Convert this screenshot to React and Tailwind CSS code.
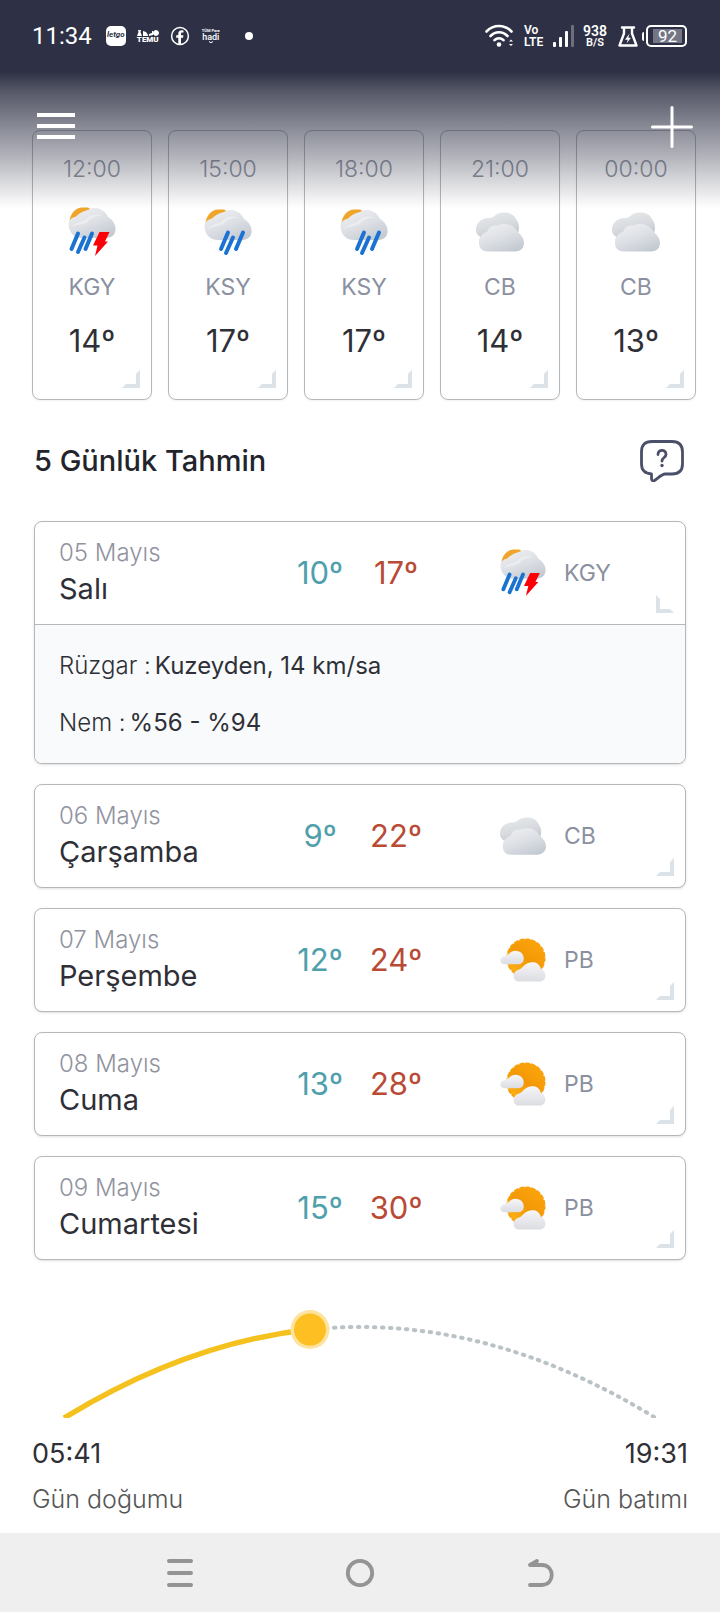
const hours = [
  { time: '12:00', code: 'KGY', temp: 14 },
  { time: '15:00', code: 'KSY', temp: 17 },
  { time: '18:00', code: 'KSY', temp: 17 },
  { time: '21:00', code: 'CB', temp: 14 },
  { time: '00:00', code: 'CB', temp: 13 },
]

const days = [
  { date: '05 Mayıs', day: 'Salı', low: 10, high: 17, code: 'KGY', wind: 'Kuzeyden, 14 km/sa', humidity: '%56 - %94' },
  { date: '06 Mayıs', day: 'Çarşamba', low: 9, high: 22, code: 'CB' },
  { date: '07 Mayıs', day: 'Perşembe', low: 12, high: 24, code: 'PB' },
  { date: '08 Mayıs', day: 'Cuma', low: 13, high: 28, code: 'PB' },
  { date: '09 Mayıs', day: 'Cumartesi', low: 15, high: 30, code: 'PB' },
]

// gradients shared by every weather icon
function IconDefs() {
  return (
    <svg className="absolute w-0 h-0" aria-hidden="true">
      <defs>
        <linearGradient id="cloud" x1="0.2" y1="0" x2="0.8" y2="1">
          <stop offset="0" stopColor="#eeeff2" />
          <stop offset="0.5" stopColor="#dcdfe4" />
          <stop offset="1" stopColor="#c2c8d1" />
        </linearGradient>
        <linearGradient id="cloudBack" x1="0.3" y1="0" x2="0.7" y2="1">
          <stop offset="0" stopColor="#e6e8ea" />
          <stop offset="0.5" stopColor="#d8dbdf" />
          <stop offset="1" stopColor="#c0c5cb" />
        </linearGradient>
        <linearGradient id="cloudWhite" x1="0" y1="0" x2="0" y2="1">
          <stop offset="0" stopColor="#f6f6f8" />
          <stop offset="1" stopColor="#dcdde2" />
        </linearGradient>
        <linearGradient id="sun" x1="0.8" y1="0.1" x2="0.2" y2="0.9">
          <stop offset="0" stopColor="#fba40a" />
          <stop offset="0.5" stopColor="#f29806" />
          <stop offset="1" stopColor="#fbb013" />
        </linearGradient>
      </defs>
    </svg>
  )
}

function RainCloud() {
  return (
    <>
      <path d="M1.500 14C2.500 6 8 .8 14 .6L20 .6 23 2.400 13 8Z" fill="#f0a52a" />
      <path d="M.5 17C.5 13 4 10.500 8 9.500 13 4 20 3.500 22 2 24 .8 26 .8 28 1 34 1.500 38 5.500 40 10 45 13 48 18 47.500 23 47 28.500 43 31 37 31H14C6 31 .5 25 .5 17Z" fill="url(#cloud)" />
      <path d="M3 21C7 15 13 15 17 13 21 8 29 6 35 9 31 8 23 10 20 15 15 18 8 17 3 21Z" fill="#fff" opacity="0.35" />
    </>
  )
}

function WeatherIcon({ code, className }) {
  return (
    <svg viewBox="0 0 48 50" className={className} aria-hidden="true">
      {code === 'KGY' && (
        <>
          <RainCloud />
          <path d="M10 26.500 3.500 42M16.500 30.500 10 45M24 26.500 17.500 42" stroke="#1a73d2" strokeWidth="4" strokeLinecap="round" />
          <path d="M31.500 25H41.500L37 34.500H40L27 49 29.500 38.500H25Z" fill="#fb0007" />
        </>
      )}
      {code === 'KSY' && (
        <g transform="translate(0 2)">
          <RainCloud />
          <path d="M24 23.500 17 40M29 28.500 22 44M39 23.500 32 40" stroke="#1a73d2" strokeWidth="4" strokeLinecap="round" />
        </g>
      )}
      {code === 'CB' && (
        <>
          <path d="M0 23C0 16 5 11 12 11 17 11 18 9 21 7 30 4 37 6 40 12 43 16 44 21 42 26L12 31C5 32 0 28 0 23Z" fill="url(#cloudBack)" />
          <path d="M11 25C13 20 16 18 21 18.500 28 15.500 38 16.500 41.500 25 46 28 48 32 48 36 48 41 44 44.500 39 44.500H12C6 44.500 2.500 41 3 35 3 29 7 26 11 25Z" fill="url(#cloud)" />
        </>
      )}
      {code === 'PB' && (
        <>
          <circle cx="27" cy="23" r="19.500" fill="url(#sun)" />
          <circle cx="27" cy="23" r="19.500" fill="none" stroke="#f7a00c" strokeWidth="2" strokeDasharray="3.500 2.600" strokeLinecap="round" />
          <path d="M5 21C6 20 8 20 10 18 13 14 21 14.500 23.500 19 26 23 25 29.500 19 29.500H5C-1.500 29.500-1 21.500 5 21Z" fill="url(#cloudWhite)" />
          <path d="M20 35C23 34 24 31 28 29 33 26 41 27 42.500 34 49 36 49.500 47.500 41 47.500H20C12.500 47.500 12 37 20 35Z" fill="url(#cloudWhite)" />
        </>
      )}
    </svg>
  )
}

function Corner({ open = false }) {
  return (
    <svg viewBox="0 0 18 18" className={`absolute right-[11px] bottom-[11px] w-[18px] h-[18px] ${open ? 'rotate-90' : ''}`} aria-hidden="true">
      <path d="M18 0V18H0L4 14H14V4Z" fill="#dbe2e8" />
    </svg>
  )
}

function StatusBar() {
  return (
    <div className="flex items-center h-[72px] pl-8 pr-[33px] text-white font-[Roboto,sans-serif]">
      <span className="text-2xl leading-6">11:34</span>
      <span className="ml-[14px] w-5 h-5 rounded-[5px] bg-white text-[#2e3145] text-[8px] leading-[18px] font-bold italic text-center">letgo</span>
      <div className="ml-[11px] w-[22px] flex flex-col items-center">
        <svg viewBox="0 0 22 6" className="w-[22px] h-[6px]" fill="currentColor" aria-hidden="true">
          <path d="M1 0H4L3.500 2 5 6H0L1.500 2ZM6 1 9 2 11 5V6H6ZM12 4 15 3V1H16V5L12 6ZM19 0A3 3 0 1 1 18.900 0Z" />
        </svg>
        <span className="text-[8px] leading-[7px] font-black">TEMU</span>
      </div>
      <svg viewBox="0 0 20 20" className="ml-[11px] w-5 h-5" aria-hidden="true">
        <circle cx="10" cy="10" r="8.400" fill="none" stroke="#fff" strokeWidth="1.500" />
        <path d="M8.300 18V11.800H6.200V9.300H8.300V7.800C8.300 5.400 9.500 4.200 11.700 4.200L13.500 4.400V6.500H12.300C11.300 6.500 11 7 11 7.800V9.300H13.400L13 11.800H11V18Z" fill="#fff" />
      </svg>
      <div className="ml-[10px] w-[22px] flex flex-col items-center">
        <span className="text-[4px] leading-[4px] font-bold whitespace-nowrap">TÜM Para</span>
        <span className="text-[9px] leading-[8px] font-medium">hadi</span>
        <svg viewBox="0 0 6 3" className="w-[6px] h-[3px]" fill="none" stroke="currentColor" aria-hidden="true">
          <path d="M1 .5Q3 3 5 .5" />
        </svg>
      </div>
      <span className="ml-[23px] w-2 h-2 rounded-full bg-white" />

      <div className="ml-auto flex items-center">
        <svg viewBox="0 0 28 24" className="w-7 h-6" fill="none" stroke="#fff" strokeWidth="2.600" strokeLinecap="round" aria-hidden="true">
          <path d="M1.500 7.500C8.500.2 19.500.2 26.500 7.500M5.500 12C10.500 7 17.500 7 22.500 12M9.500 16.200C12 13.600 16 13.600 18.500 16.200" />
          <circle cx="14" cy="20.500" r="2.300" fill="#fff" stroke="none" />
          <path d="M24 17.600 26 15.600 28 17.600ZM24 20 26 22 28 20Z" fill="#fff" stroke="none" />
        </svg>
        <span className="ml-[11px] w-5 text-[12px] leading-[12px] font-semibold">Vo LTE</span>
        <svg viewBox="0 0 22 22" className="ml-[9px] w-[22px] h-[22px]" fill="#fff" aria-hidden="true">
          <rect x="0" y="17" width="3" height="5" rx="1" />
          <rect x="6" y="12" width="3" height="10" rx="1" />
          <rect x="12" y="6" width="3" height="16" rx="1" />
          <rect x="18" y="0" width="3" height="22" rx="1" opacity="0.3" />
        </svg>
        <div className="ml-[8px] w-6 flex flex-col items-center font-semibold">
          <span className="text-[14px] leading-[12px]">938</span>
          <span className="text-[11px] leading-[11px]">B/S</span>
        </div>
        <svg viewBox="0 0 20 21" className="ml-[11px] w-5 h-[21px]" fill="none" stroke="#fff" strokeWidth="2.400" strokeLinejoin="round" strokeLinecap="round" aria-hidden="true">
          <path d="M4 1.500H16M6 1.500V7.500L1.500 19.500H18.500L14 7.500V1.500" />
          <path d="M11.500 7.500 7 13.800H9.800L8.500 17.500 13 11.800H10.300Z" fill="#fff" stroke="none" />
        </svg>
        <span className="ml-1 w-[2px] h-[9px] rounded-l bg-white" />
        <span className="ml-[2px] w-[41px] h-[22px] rounded-[5px] border-2 border-white p-[2px] flex">
          <span className="flex-1 mr-px ml-[3px] bg-[#747685] text-[17px] leading-[15px] text-center">92</span>
        </span>
      </div>
    </div>
  )
}

function Header() {
  return (
    <header className="absolute inset-x-0 top-0 z-10 h-[212px] bg-[linear-gradient(to_bottom,#2e3145_0,#2e3145_72px,rgba(46,49,69,0.82)_90px,rgba(46,49,69,0.6)_122px,rgba(46,49,69,0.4)_152px,rgba(46,49,69,0.17)_184px,rgba(46,49,69,0)_208px)]">
      <StatusBar />
      <div className="flex justify-between items-start pt-[34px] pl-[37px] pr-[27px]">
        <button type="button" aria-label="Menü" className="pt-[7px]">
          <svg viewBox="0 0 38 26" className="w-[38px] h-[26px]" fill="#fff" aria-hidden="true">
            <path d="M0 0H38V4H0ZM0 11H38V15H0ZM0 22H38V26H0Z" />
          </svg>
        </button>
        <button type="button" aria-label="Yer ekle">
          <svg viewBox="0 0 42 42" className="w-[42px] h-[42px]" stroke="#fff" strokeWidth="3" strokeLinecap="round" aria-hidden="true">
            <path d="M21 1.500V40.500M1.500 21H40.500" />
          </svg>
        </button>
      </div>
    </header>
  )
}

function HourCard({ h }) {
  return (
    <button
      type="button"
      className="relative h-[270px] flex flex-col items-center rounded-lg border border-[#b4b8bb] bg-white shadow-xs pt-[24px]"
    >
      <span className="text-[23px] leading-7 font-light text-[#8f93a0]">{h.time}</span>
      <WeatherIcon code={h.code} className="mt-6 w-12 h-[50px]" />
      <span className="mt-4 text-[23px] leading-7 text-[#8b90a0]">{h.code}</span>
      <span className="mt-5 text-[31px] leading-10 text-[#2f3037]">{h.temp}º</span>
      <Corner />
    </button>
  )
}

function DayCard({ d }) {
  const open = Boolean(d.wind)
  return (
    <article className="rounded-lg border border-[#b4b8bb] bg-white shadow-sm overflow-hidden">
      <button
        type="button"
        aria-expanded={open}
        className="relative w-full h-[102px] grid grid-cols-[minmax(0,1fr)_76px_76px_251px] items-center text-left"
      >
        <span className="pl-6 flex flex-col">
          <span className="text-[24px] leading-8 font-light text-[#91939f]">{d.date}</span>
          <span className="text-[29px] leading-10 text-[#2f3037]">{d.day}</span>
        </span>
        <span className="text-[31px] text-center text-[#4fa0ac]">{d.low}º</span>
        <span className="text-[31px] text-center text-[#b94a36]">{d.high}º</span>
        <span className="pl-[66px] flex items-center gap-[18px] text-[23px] text-[#8b90a0]">
          <WeatherIcon code={d.code} className="w-[46px] h-12" />
          {d.code}
        </span>
        <Corner open={open} />
      </button>
      {open && (
        <dl className="border-t border-[#b4b8bb] bg-[#f9fafc] px-6 pt-3 pb-3 text-[24px] leading-[57px] text-[#2f3037]">
          <div className="flex gap-1">
            <dt className="font-light">Rüzgar :</dt>
            <dd>{d.wind}</dd>
          </div>
          <div className="flex gap-1">
            <dt className="font-light">Nem :</dt>
            <dd>{d.humidity}</dd>
          </div>
        </dl>
      )}
    </article>
  )
}

function SunPath() {
  return (
    <section className="mt-[46px] px-8 pb-[11px]">
      <svg viewBox="0 0 656 112" className="w-full overflow-hidden" fill="none" role="img" aria-label="Güneşin konumu">
        <path d="M278 23.600Q450 5.700 622 111" stroke="#b9c2c5" strokeWidth="4" strokeDasharray="1.500 6.500" strokeLinecap="round" />
        <path d="M32 112Q156 36.300 278 23.600" stroke="#f5c11f" strokeWidth="5.500" />
        <circle cx="278" cy="23.600" r="19.500" fill="#fde3a0" />
        <circle cx="278" cy="23.600" r="16" fill="#fdbf22" />
      </svg>
      <div className="mt-[14px] flex justify-between">
        <div>
          <div className="text-[27px] leading-[44px] text-[#2f3037]">05:41</div>
          <div className="text-[25px] leading-[46px] font-light text-[#555]">Gün doğumu</div>
        </div>
        <div className="text-right">
          <div className="text-[27px] leading-[44px] text-[#2f3037]">19:31</div>
          <div className="text-[25px] leading-[46px] font-light text-[#555]">Gün batımı</div>
        </div>
      </div>
    </section>
  )
}

function NavBar() {
  return (
    <nav className="h-20 bg-[#efefef] flex items-center justify-center gap-[148px]">
      <button type="button" aria-label="Son uygulamalar">
        <svg viewBox="0 0 32 32" className="w-8 h-8" stroke="#949494" strokeWidth="4" strokeLinecap="round" aria-hidden="true">
          <path d="M5 4H27M5 16H27M5 28H27" />
        </svg>
      </button>
      <button type="button" aria-label="Ana ekran">
        <svg viewBox="0 0 32 32" className="w-8 h-8" fill="none" stroke="#949494" strokeWidth="3.800" aria-hidden="true">
          <circle cx="16" cy="16" r="12.200" />
        </svg>
      </button>
      <button type="button" aria-label="Geri">
        <svg viewBox="0 0 32 32" className="w-8 h-8" fill="none" stroke="#949494" strokeWidth="3.800" strokeLinecap="round" strokeLinejoin="round" aria-hidden="true">
          <path d="M13 4 6 8H18C31 8 31 28 18 28H6" />
        </svg>
      </button>
    </nav>
  )
}

export default function App() {
  return (
    <div className="relative min-h-screen flex flex-col bg-white overflow-x-hidden font-[Inter,'Open_Sans',sans-serif]">
      <IconDefs />
      <Header />
      <main className="flex-1 pt-[130px]">
        <section className="grid grid-cols-5 gap-4 pl-8 pr-6">
          {hours.map((h) => (
            <HourCard key={h.time} h={h} />
          ))}
        </section>

        <section className="px-[34px]">
          <div className="h-[121px] flex items-center justify-between">
            <h2 className="text-[29px] font-medium text-[#23242b]">5 Günlük Tahmin</h2>
            <button type="button" aria-label="Yardım" className="mr-[2px]">
              <svg viewBox="0 0 44 42" className="w-11 h-[42px]" fill="none" stroke="#4b4f69" strokeWidth="2.800" strokeLinecap="round" strokeLinejoin="round" aria-hidden="true">
                <path d="M12 1.500H32C39 1.500 42.500 5 42.500 12V24C42.500 31 39 34 32 34H25C22 34 17 39 14.500 40.500 12.500 41.500 11.500 40 11.500 38.500V34C5 33.500 1.500 30 1.500 24V12C1.500 5 5 1.500 12 1.500Z" />
                <path d="M18 14.500C18 9 26 9 26 14.500 26 17.500 22 17.500 22 21" />
                <circle cx="22" cy="25.500" r="1.700" fill="#4b4f69" stroke="none" />
              </svg>
            </button>
          </div>
          <div className="flex flex-col gap-5">
            {days.map((d) => (
              <DayCard key={d.date} d={d} />
            ))}
          </div>
        </section>

        <SunPath />
      </main>
      <NavBar />
    </div>
  )
}
